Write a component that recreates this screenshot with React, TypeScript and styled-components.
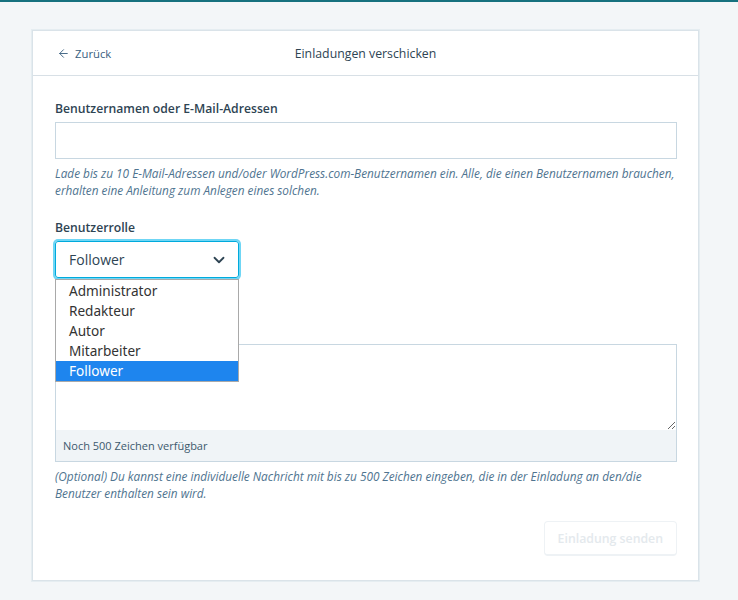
import React from "react";
import styled, { createGlobalStyle } from "styled-components";
import { ArrowLeft, ChevronDown } from "lucide-react";

const ROLES = ["Administrator", "Redakteur", "Autor", "Mitarbeiter", "Follower"];

const GlobalStyle = createGlobalStyle`
  html, body {
    margin: 0;
    padding: 0;
    background: #f3f6f8;
  }
  body {
    font-family: "Open Sans", "Noto Sans", sans-serif;
    color: #2e4453;
  }
`;

const Page = styled.div`
  min-height: 600px;
  border-top: 2px solid #16717f;
  padding: 28px 39px 20px 32px;
  box-sizing: border-box;
`;

const Card = styled.div`
  background: #fff;
  border: 1px solid #dae3e9;
  box-shadow: 0 0 0 1px rgba(200, 215, 225, 0.3);
`;

const Header = styled.div`
  display: grid;
  grid-template-columns: 1fr auto 1fr;
  align-items: center;
  height: 44px;
  padding: 0 24px;
  border-bottom: 1px solid #d8e0e6;
`;

const BackLink = styled.a`
  display: flex;
  align-items: center;
  gap: 5px;
  font-size: 11.3px;
  color: #3a6080;
  text-decoration: none;
`;

const Title = styled.div`
  font-size: 12.3px;
  color: #2e4453;
`;

const Body = styled.div`
  padding: 24px 21px 24px 22px;
`;

const Fieldset = styled.div<{ gap?: number }>`
  margin-bottom: ${(p) => p.gap ?? 20}px;
`;

const Label = styled.div`
  font-size: 12.2px;
  font-weight: 600;
  line-height: 18px;
  margin-bottom: 4px;
`;

const TextInput = styled.div`
  height: 35px;
  border: 1px solid #c8d7e1;
`;

const Help = styled.p`
  margin: 6px 0 0;
  font-size: 11.8px;
  font-style: italic;
  line-height: 17px;
  color: #4f7490;
`;

const SelectAnchor = styled.div`
  position: relative;
  width: 184px;
`;

const SelectBox = styled.div`
  height: 37px;
  box-sizing: border-box;
  border: 1px solid #00aadc;
  border-radius: 3px;
  box-shadow: 0 0 0 2px #6fd6f5;
  display: flex;
  align-items: center;
  justify-content: space-between;
  padding: 0 10px 0 13px;
  font-size: 14px;
  margin-top: 1px;
`;

const Menu = styled.ul`
  position: absolute;
  left: 0;
  top: 100%;
  width: 184px;
  margin: 1px 0 0;
  padding: 1px 0 0;
  list-style: none;
  background: #fff;
  border: 1px solid #a9a9a9;
  box-sizing: border-box;
  z-index: 2;
  font-family: "Noto Sans", "Open Sans", sans-serif;
`;

const MenuItem = styled.li<{ selected?: boolean }>`
  height: 20px;
  line-height: 20px;
  padding-left: 13px;
  font-size: 13.6px;
  color: ${(p) => (p.selected ? "#fff" : "#333")};
  background: ${(p) => (p.selected ? "#1e85ee" : "transparent")};
`;

const TextareaWrap = styled.div`
  border: 1px solid #c8d7e1;
`;

const Textarea = styled.textarea`
  display: block;
  width: 100%;
  height: 85px;
  box-sizing: border-box;
  border: none;
  resize: vertical;
  outline: none;
  font: inherit;
`;

const Counter = styled.div`
  height: 31px;
  background: #f0f4f7;
  display: flex;
  align-items: center;
  padding: 0 7px;
  font-size: 11px;
  color: #3d596d;
`;

const Actions = styled.div`
  display: flex;
  justify-content: flex-end;
  margin-top: 19px;
`;

const Button = styled.button`
  height: 35px;
  padding: 0 13px;
  background: #fff;
  border: 1px solid #eef2f5;
  border-bottom-width: 2px;
  border-radius: 4px;
  font-family: inherit;
  font-size: 12.3px;
  font-weight: 600;
  color: #e4e9ed;
`;

export default function App() {
  return (
    <>
      <GlobalStyle />
      <Page>
        <Card>
          <Header>
            <BackLink href="#">
              <ArrowLeft size={13} strokeWidth={1.7} />
              Zurück
            </BackLink>
            <Title>Einladungen verschicken</Title>
            <span />
          </Header>
          <Body>
            <Fieldset gap={20}>
              <Label>Benutzernamen oder E-Mail-Adressen</Label>
              <TextInput />
              <Help>
                Lade bis zu 10 E-Mail-Adressen und/oder WordPress.com-Benutzernamen ein. Alle, die
                einen Benutzernamen brauchen, erhalten eine Anleitung zum Anlegen eines solchen.
              </Help>
            </Fieldset>
            <Fieldset gap={66}>
              <Label>Benutzerrolle</Label>
              <SelectAnchor>
                <SelectBox>
                  Follower
                  <ChevronDown size={18} strokeWidth={2.4} color="#2e4453" />
                </SelectBox>
                <Menu>
                  {ROLES.map((role) => (
                    <MenuItem key={role} selected={role === "Follower"}>
                      {role}
                    </MenuItem>
                  ))}
                </Menu>
              </SelectAnchor>
            </Fieldset>
            <Fieldset gap={0}>
              <TextareaWrap>
                <Textarea aria-label="Individuelle Nachricht" />
                <Counter>Noch 500 Zeichen verfügbar</Counter>
              </TextareaWrap>
              <Help>
                (Optional) Du kannst eine individuelle Nachricht mit bis zu 500 Zeichen eingeben, die
                in der Einladung an den/die Benutzer enthalten sein wird.
              </Help>
            </Fieldset>
            <Actions>
              <Button disabled>Einladung senden</Button>
            </Actions>
          </Body>
        </Card>
      </Page>
    </>
  );
}
